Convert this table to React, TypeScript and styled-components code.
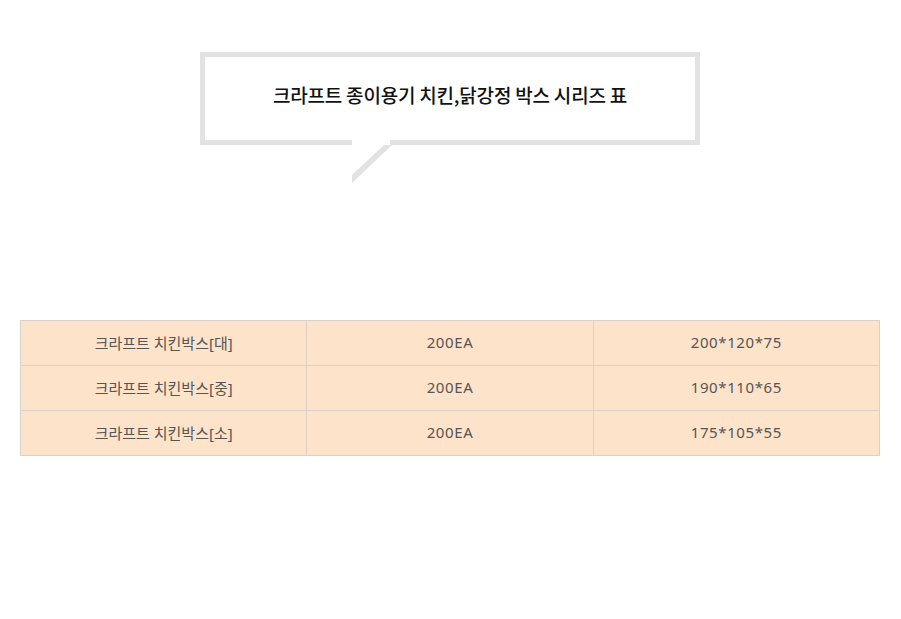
import React from 'react';
import styled, { createGlobalStyle } from 'styled-components';

const GlobalStyle = createGlobalStyle`
  html, body {
    margin: 0;
    padding: 0;
    background: #ffffff;
  }
  body {
    font-family: "Noto Sans CJK KR", "Noto Sans", sans-serif;
  }
`;

const Page = styled.div`
  width: 900px;
  padding-top: 52px;
  display: flex;
  flex-direction: column;
  align-items: center;
`;

const Bubble = styled.div`
  position: relative;
  box-sizing: border-box;
  width: 500px;
  height: 93px;
  border: 5px solid #e2e2e2;
  background: #fff;
  display: flex;
  align-items: center;
  justify-content: center;
  padding-bottom: 9px;
`;

const Title = styled.h2`
  margin: 0;
  font-family: "Noto Sans CJK KR", sans-serif;
  font-size: 19px;
  font-weight: 500;
  color: #111;
  letter-spacing: -0.2px;
`;

const Tail = styled.svg`
  position: absolute;
  left: 147px;
  top: 83px;
  overflow: visible;
`;

const Spacer = styled.div`
  height: 175px;
`;

const Table = styled.table`
  width: 860px;
  border-collapse: collapse;
  table-layout: fixed;
`;

const Cell = styled.td<{ $wide?: boolean }>`
  height: 42px;
  padding: 0 0 2px;
  background: #fde3ca;
  border: 1px solid #dcd0cc;
  text-align: center;
  font-family: "Noto Sans", "Noto Sans CJK KR", sans-serif;
  font-size: 15px;
  color: #555;
  letter-spacing: ${(p) => (p.$wide ? '0.6px' : '0')};
`;

const rows = [
  ['크라프트 치킨박스[대]', '200EA', '200*120*75'],
  ['크라프트 치킨박스[중]', '200EA', '190*110*65'],
  ['크라프트 치킨박스[소]', '200EA', '175*105*55'],
];

export default function App() {
  return (
    <>
      <GlobalStyle />
      <Page>
        <Bubble>
          <Title>크라프트 종이용기 치킨,닭강정 박스 시리즈 표</Title>
          <Tail width="45" height="45">
            <rect x="0" y="0" width="38" height="12" fill="#fff" />
            <polygon points="32,5 40,5 0,43 0,35" fill="#e2e2e2" />
          </Tail>
        </Bubble>
        <Spacer />
        <Table>
          <tbody>
            {rows.map((row) => (
              <tr key={row[0]}>
                {row.map((c, i) => (
                  <Cell key={c} $wide={i > 0}>
                    {c}
                  </Cell>
                ))}
              </tr>
            ))}
          </tbody>
        </Table>
      </Page>
    </>
  );
}
